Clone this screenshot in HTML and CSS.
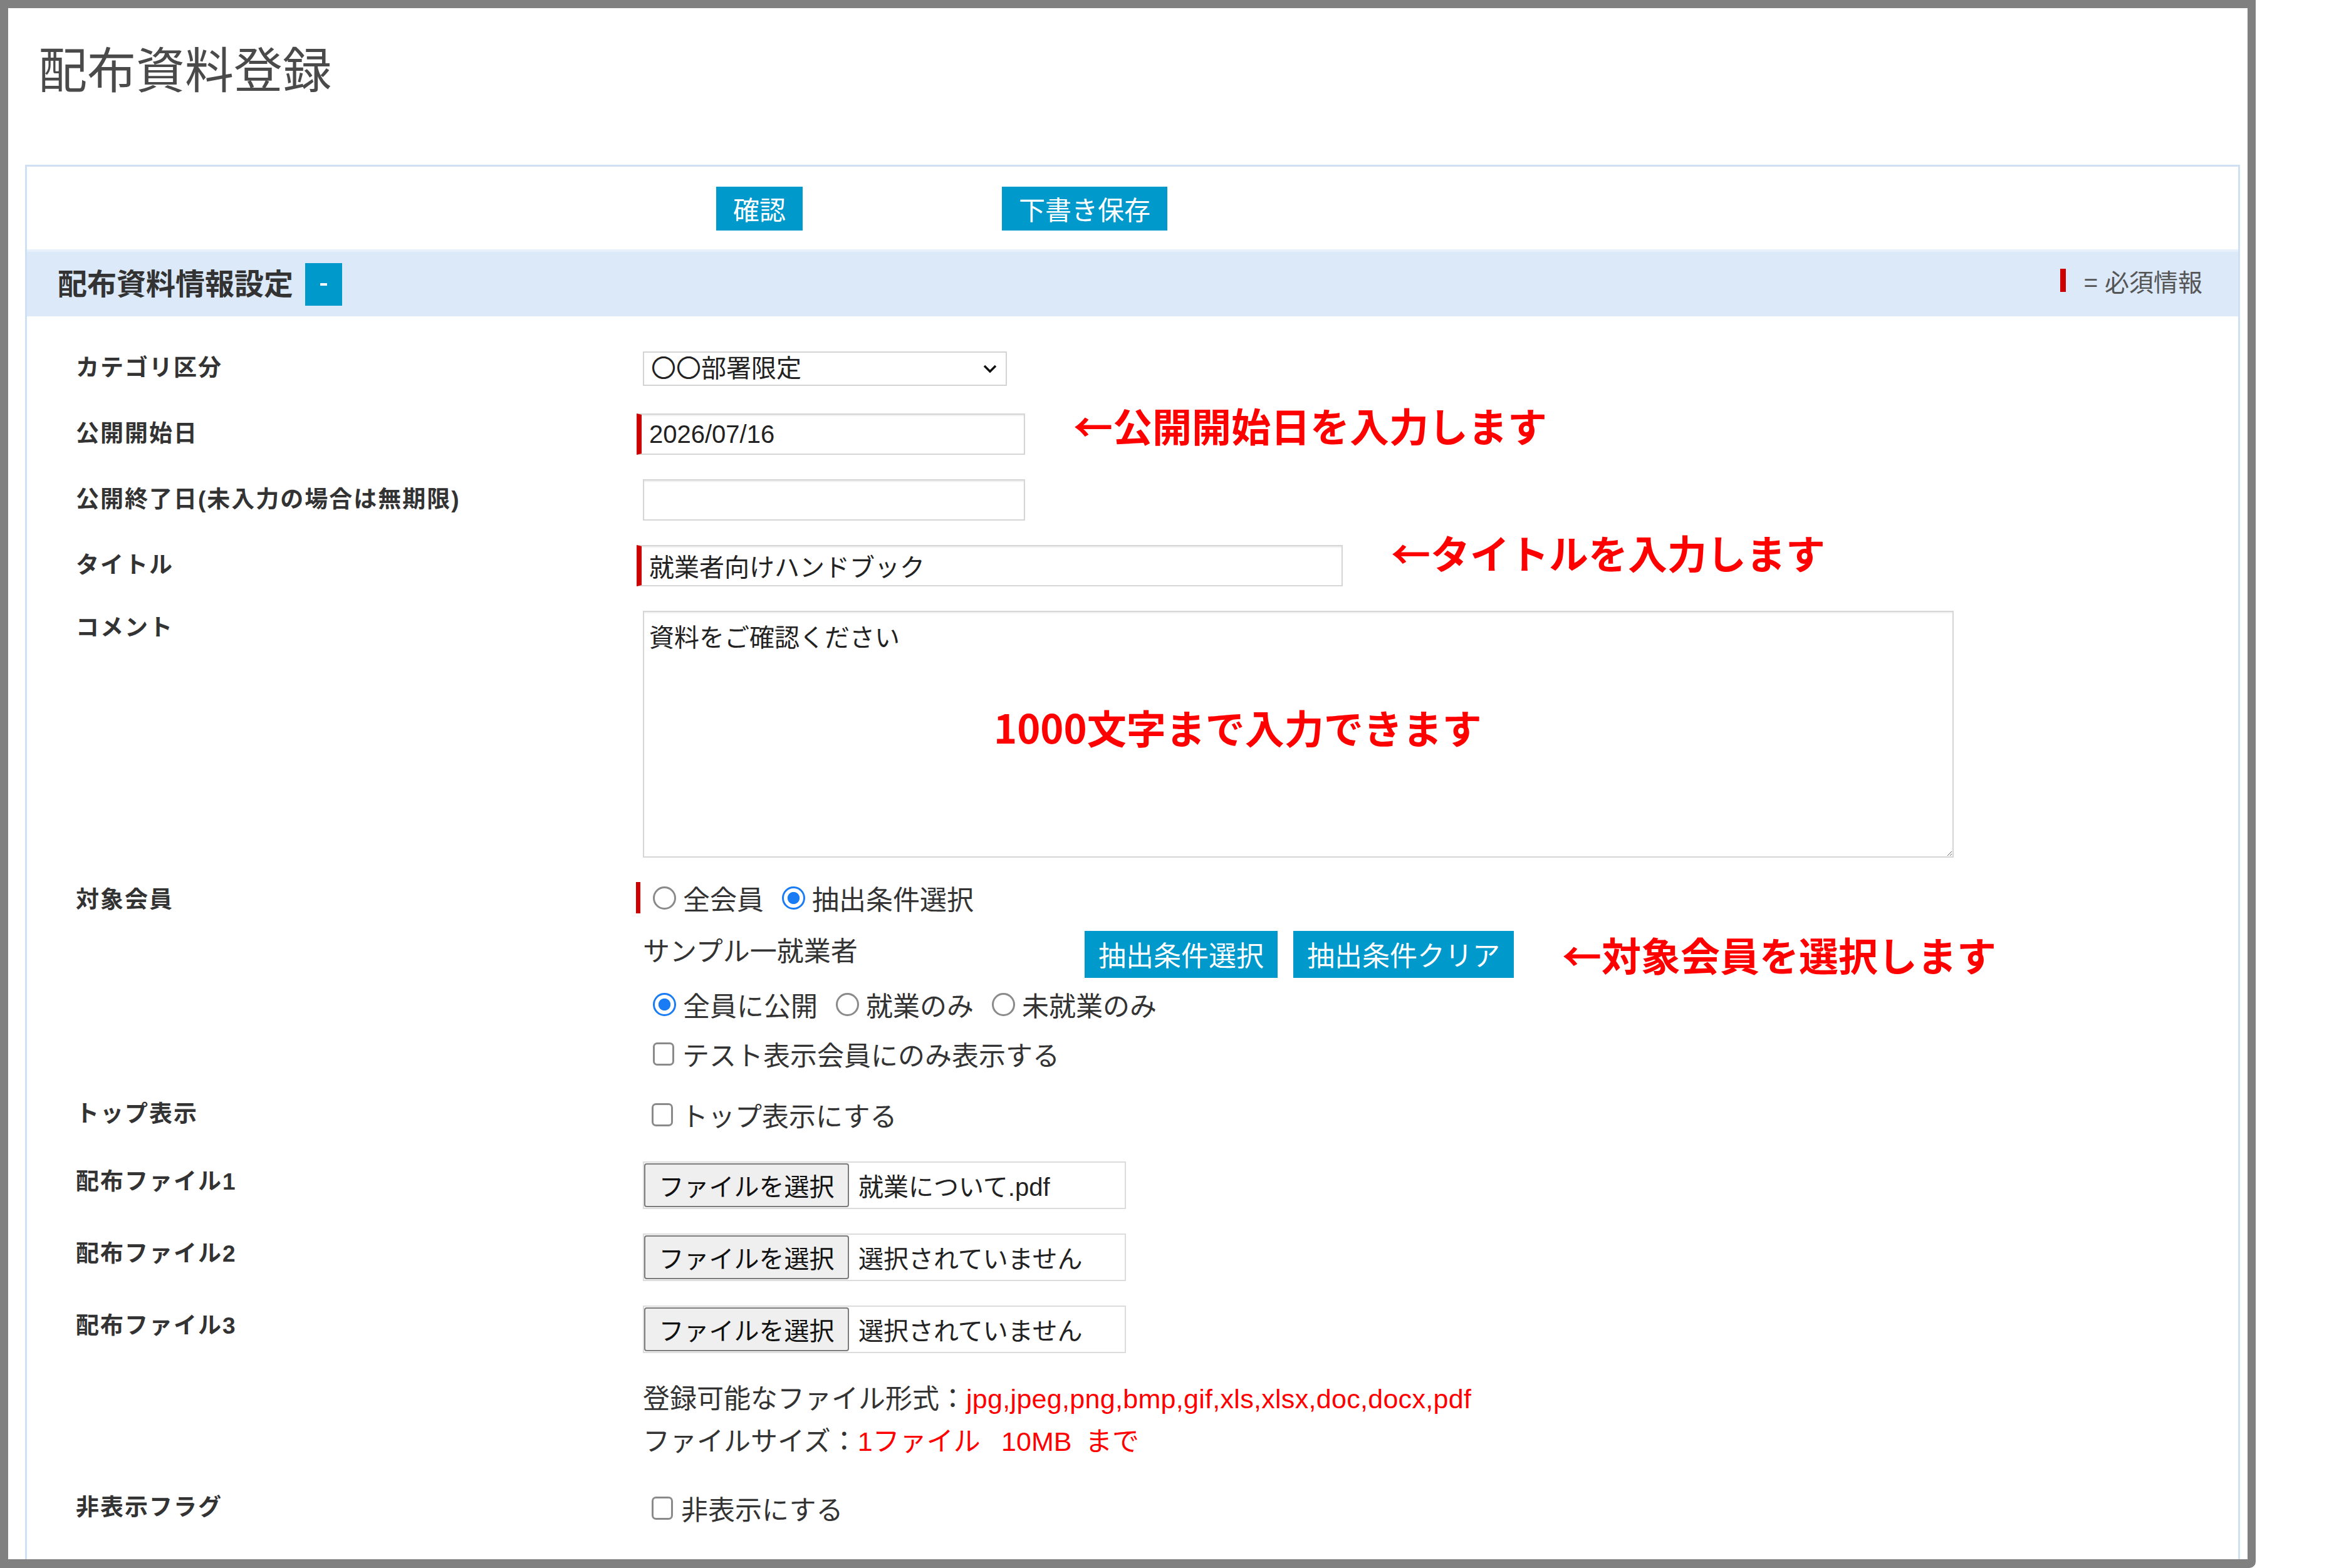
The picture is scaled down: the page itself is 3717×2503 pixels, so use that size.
FILE: index.html
```html
<!DOCTYPE html>
<html lang="ja">
<head>
  <meta charset="UTF-8">
  <meta name="viewport" content="width=device-width, initial-scale=1.0">
  <title>配布資料登録</title>
  <link rel="stylesheet" href="styles.css">
</head>
<body>
  <div class="frame">
    <h1 class="page-title">配布資料登録</h1>

    <div class="panel">
      <div class="actions">
        <button class="btn">確認</button>
        <button class="btn">下書き保存</button>
      </div>

      <div class="section-head">
        <h2>配布資料情報設定</h2>
        <span class="toggle"><i></i></span>
        <p class="legend"><span class="req-mark"></span>= 必須情報</p>
      </div>

      <div class="form">
        <div class="row">
          <div class="label">カテゴリ区分</div>
          <div class="field">
            <div class="select-wrap">
              <select class="select"><option>〇〇部署限定</option></select>
              <svg class="chev" viewBox="0 0 22 14"><path d="M2 2 L11 11 L20 2" fill="none" stroke="#111" stroke-width="3.5"/></svg>
            </div>
          </div>
        </div>

        <div class="row">
          <div class="label">公開開始日</div>
          <div class="field">
            <input class="input req" type="text" value="2026/07/16">
            <span class="callout callout-up">←公開開始日を入力します</span>
          </div>
        </div>

        <div class="row">
          <div class="label">公開終了日(未入力の場合は無期限)</div>
          <div class="field">
            <input class="input" type="text" value="">
          </div>
        </div>

        <div class="row">
          <div class="label">タイトル</div>
          <div class="field">
            <input class="input input-wide req" type="text" value="就業者向けハンドブック">
            <span class="callout callout-up2">←タイトルを入力します</span>
          </div>
        </div>

        <div class="row">
          <div class="label label-comment">コメント</div>
          <div class="field">
            <div class="textarea-wrap">
              <textarea class="textarea">資料をご確認ください</textarea>
              <span class="callout callout-inside">1000文字まで入力できます</span>
            </div>
          </div>
        </div>

        <div class="row">
          <div class="label label-members">対象会員</div>
          <div class="field members">
            <div class="line line-req">
              <label class="radio"><input type="radio" name="target">全会員</label>
              <label class="radio"><input type="radio" name="target" checked>抽出条件選択</label>
            </div>
            <div class="line line-sample">
              <span class="sample-name">サンプル一就業者</span>
              <button class="btn btn-sm">抽出条件選択</button>
              <button class="btn btn-sm">抽出条件クリア</button>
              <span class="callout callout-flat">←対象会員を選択します</span>
            </div>
            <div class="line line-pub">
              <label class="radio"><input type="radio" name="pub" checked>全員に公開</label>
              <label class="radio"><input type="radio" name="pub">就業のみ</label>
              <label class="radio"><input type="radio" name="pub">未就業のみ</label>
            </div>
            <div class="line line-test">
              <label class="check"><input type="checkbox">テスト表示会員にのみ表示する</label>
            </div>
          </div>
        </div>

        <div class="row row-top">
          <div class="label">トップ表示</div>
          <div class="field">
            <label class="check"><input type="checkbox">トップ表示にする</label>
          </div>
        </div>

        <div class="row">
          <div class="label">配布ファイル1</div>
          <div class="field">
            <div class="file"><button class="file-btn">ファイルを選択</button><span class="file-name">就業について.pdf</span></div>
          </div>
        </div>

        <div class="row">
          <div class="label">配布ファイル2</div>
          <div class="field">
            <div class="file"><button class="file-btn">ファイルを選択</button><span class="file-name">選択されていません</span></div>
          </div>
        </div>

        <div class="row">
          <div class="label">配布ファイル3</div>
          <div class="field">
            <div class="file"><button class="file-btn">ファイルを選択</button><span class="file-name">選択されていません</span></div>
          </div>
        </div>

        <div class="row">
          <div class="label"></div>
          <div class="field notes">
            <p>登録可能なファイル形式：<span class="red red-latin">jpg,jpeg,png,bmp,gif,xls,xlsx,doc,docx,pdf</span></p>
            <p>ファイルサイズ：<span class="red">1ファイル&ensp;&nbsp;10MB&ensp;まで</span></p>
          </div>
        </div>

        <div class="row">
          <div class="label">非表示フラグ</div>
          <div class="field">
            <label class="check"><input type="checkbox">非表示にする</label>
          </div>
        </div>
      </div>
    </div>
  </div>
</body>
</html>
```

FILE: styles.css
```css
* {
  box-sizing: border-box;
}
body {
  margin: 0;
  background: #fff;
  font-family: "Liberation Sans", "Noto Sans CJK JP", sans-serif;
  color: #333;
}
.frame {
  width: 3600px;
  height: 2503px;
  border: 13px solid #808080;
  border-bottom-width: 14px;
  border-bottom-right-radius: 10px;
  display: flex;
  flex-direction: column;
  overflow: hidden;
}
.page-title {
  margin: 51px 0 99px 48px;
  font-size: 78px;
  line-height: 100px;
  font-weight: normal;
  color: #4a4a4a;
}
.panel {
  flex: 1;
  margin: 0 12px 0 27px;
  border: 3px solid #cfe0f5;
  border-bottom: 0;
}

/* top buttons */
.actions {
  display: flex;
  gap: 318px;
  padding: 32px 0 30px 1100px;
}
.btn {
  height: 70px;
  padding: 0 27px;
  border: 0;
  background: #0099cc;
  color: #fff;
  font-family: "Noto Sans CJK JP", sans-serif;
  font-size: 42px;
  line-height: 70px;
}

/* section header */
.section-head {
  display: flex;
  align-items: center;
  height: 107px;
  padding: 0 57px 0 49px;
  background: #dbe9f8;
  border-top: 4px solid #e7f0fb;
}
.section-head h2 {
  margin: 0;
  font-size: 47px;
  line-height: 60px;
  font-weight: bold;
  color: #333;
}
.toggle {
  width: 59px;
  height: 68px;
  margin-left: 19px;
  background: #0099cc;
  display: flex;
  align-items: center;
  justify-content: center;
}
.toggle i {
  width: 11px;
  height: 4px;
  background: #fff;
}
.legend {
  margin: 0 0 12px auto;
  display: flex;
  align-items: center;
  font-size: 39px;
  color: #555;
}
.req-mark {
  width: 9px;
  height: 37px;
  margin-right: 28px;
  background: #cc0000;
}

/* form rows */
.form {
  padding-top: 31px;
}
.row {
  display: flex;
  padding: 19px 0 20px;
}
.row-top {
  padding-bottom: 23px;
}
.label {
  flex-shrink: 0;
  width: 983px;
  padding-left: 78px;
  font-size: 37px;
  letter-spacing: 2px;
  font-weight: bold;
  line-height: 66px;
  color: #333;
}
.label-comment {
  line-height: 56px;
}
.label-members {
  line-height: 58px;
}
.field {
  display: flex;
  align-items: center;
  min-height: 66px;
  font-size: 43px;
}

.select-wrap {
  position: relative;
  width: 581px;
  height: 55px;
}
.select {
  appearance: none;
  width: 100%;
  height: 100%;
  padding: 0 0 0 11px;
  border: 2px solid #d4d4d4;
  border-radius: 0;
  background: #fff;
  font-family: "Liberation Sans", "Noto Sans CJK JP", sans-serif;
  font-size: 40px;
  color: #222;
}
.chev {
  position: absolute;
  right: 16px;
  top: 21px;
  width: 22px;
  height: 14px;
  pointer-events: none;
}

.input {
  width: 610px;
  height: 66px;
  padding: 0 8px;
  border: 2px solid #d6d6d6;
  box-shadow: inset 0 2px 2px rgba(0, 0, 0, 0.08);
  font-family: "Liberation Sans", "Noto Sans CJK JP", sans-serif;
  font-size: 40px;
  color: #222;
}
.input.req {
  width: 620px;
  margin-left: -10px;
  padding-left: 12px;
  border-left: 8px solid #cc0000;
}
.input-wide.req {
  width: 1127px;
}

.callout {
  margin-left: 77px;
  white-space: nowrap;
  color: #ff0000;
  font-family: "Noto Sans CJK JP", sans-serif;
  font-size: 63px;
  font-weight: bold;
  line-height: 70px;
}
.callout-up {
  margin-top: -30px;
}
.callout-up2 {
  margin-top: -44px;
}
.callout-inside {
  position: absolute;
  left: 560px;
  top: 150px;
  margin: 0;
}

.textarea-wrap {
  position: relative;
}
.textarea {
  display: block;
  width: 2092px;
  height: 394px;
  padding: 15px 8px;
  border: 2px solid #d6d6d6;
  box-shadow: inset 0 2px 2px rgba(0, 0, 0, 0.06);
  font-family: "Liberation Sans", "Noto Sans CJK JP", sans-serif;
  font-size: 40px;
  line-height: 52px;
  color: #222;
}

/* target members */
.members {
  flex-direction: column;
  align-items: flex-start;
}
.line {
  display: flex;
  align-items: center;
  height: 50px;
}
.line-req {
  margin-left: -11px;
  padding-left: 20px;
  border-left: 7px solid #cc0000;
}
.line-sample {
  height: 75px;
  margin-top: 28px;
}
.line-pub {
  margin-top: 17px;
  padding-left: 16px;
}
.line-test {
  margin-top: 29px;
  padding-left: 16px;
}
.sample-name {
  width: 705px;
  margin-top: -18px;
}
.btn-sm {
  height: 75px;
  padding: 0 22px;
  margin-right: 25px;
  font-size: 44px;
  line-height: 75px;
}
.btn-sm + .btn-sm {
  margin-right: 0;
}
.callout-flat {
  margin-left: 77px;
  margin-top: -2px;
}
.radio,
.check {
  display: flex;
  align-items: center;
  margin-right: 29px;
}
.radio input {
  appearance: none;
  flex-shrink: 0;
  width: 37px;
  height: 37px;
  margin: 0 11px 0 0;
  border: 3px solid #8a8a8a;
  border-radius: 50%;
  background: #fff;
}
.radio input:checked {
  border-color: #1a7cf5;
  background: radial-gradient(circle, #1a7cf5 0 42%, #fff 46%);
}
.check input {
  appearance: none;
  flex-shrink: 0;
  width: 34px;
  height: 37px;
  margin: 0 13px 0 0;
  border: 3px solid #8a8a8a;
  border-radius: 7px;
  background: #fff;
}
.row .field > .check {
  margin-left: 14px;
}

/* file inputs */
.file {
  display: flex;
  align-items: center;
  width: 771px;
  height: 76px;
  border: 2px solid #dcdcdc;
  background: #fff;
}
.file-btn {
  width: 327px;
  height: 70px;
  padding: 0;
  border: 2px solid #7b7b7b;
  border-radius: 4px;
  background: #efefef;
  color: #111;
  font-family: "Noto Sans CJK JP", sans-serif;
  font-size: 40px;
}
.file-name {
  margin-left: 15px;
  font-size: 40px;
  color: #222;
}

.notes {
  display: block;
}
.notes p {
  margin: 0;
  line-height: 68px;
}
.red {
  color: #ff0000;
}
.red-latin {
  letter-spacing: 0.3px;
}
```
